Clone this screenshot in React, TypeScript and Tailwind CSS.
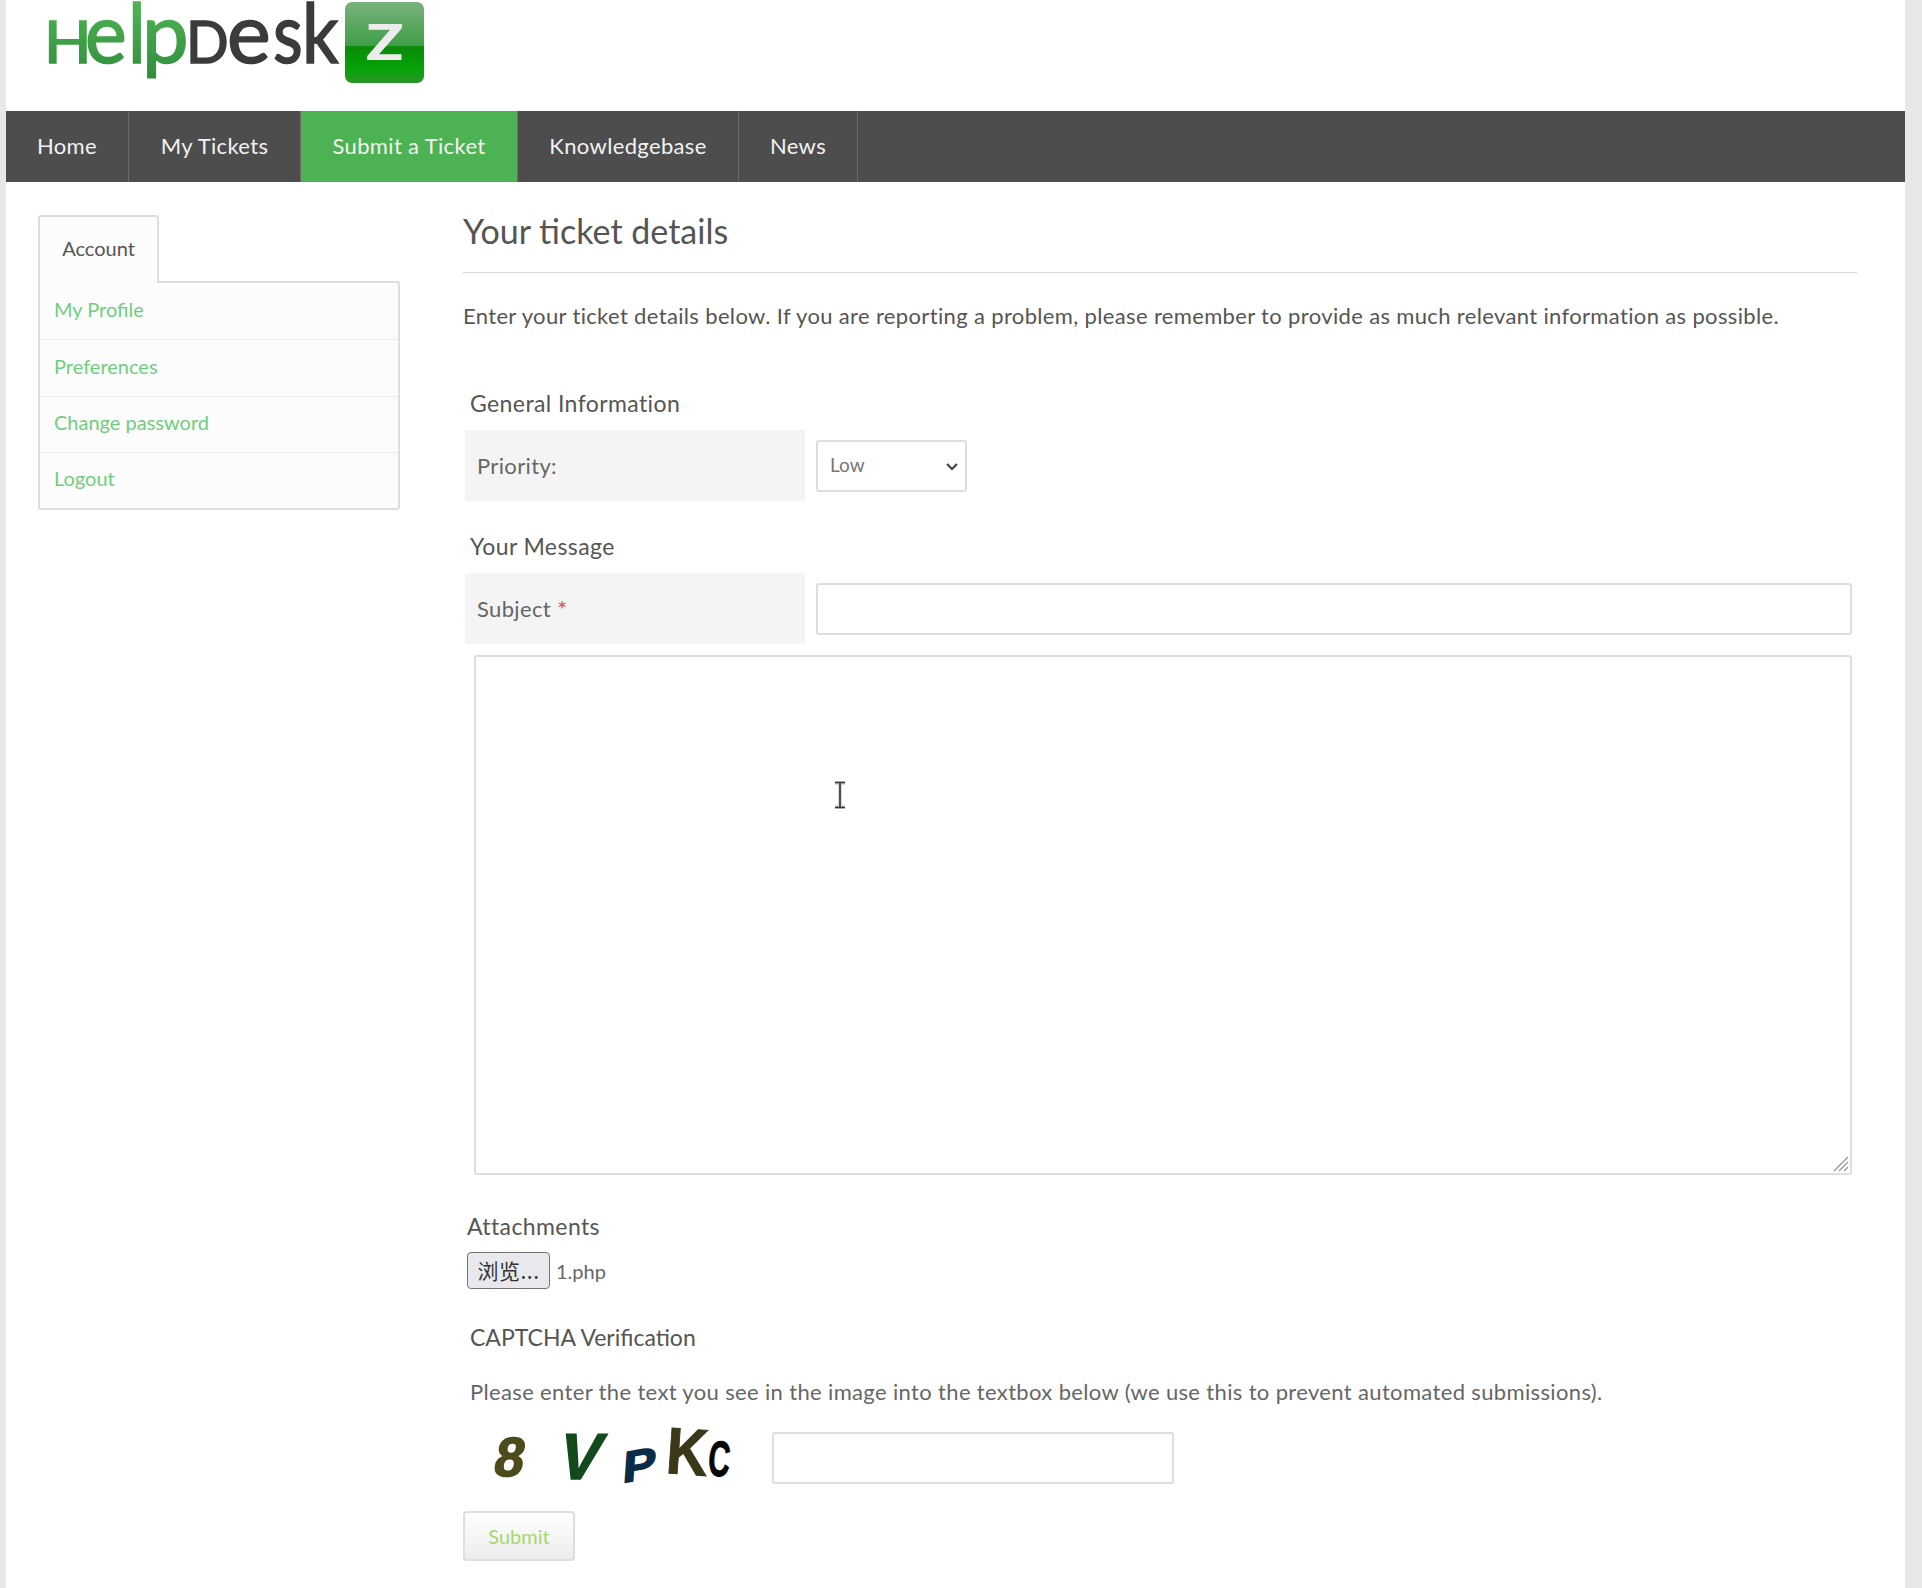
const navItems = [
  { label: "Home", width: "w-[123px]" },
  { label: "My Tickets", width: "w-[172px]" },
  { label: "Submit a Ticket", width: "w-[217px]", active: true },
  { label: "Knowledgebase", width: "w-[221px]" },
  { label: "News", width: "w-[119px]" },
];

const accountLinks = ["My Profile", "Preferences", "Change password", "Logout"];

const logoGreen = [
  { ch: "H", x: 38, size: 58, w: 48 },
  { ch: "e", x: 79, size: 84, w: 42 },
  { ch: "l", x: 122, size: 84, w: 18 },
  { ch: "p", x: 136, size: 84, w: 47 },
];

const logoDark = [
  { ch: "D", x: 180, size: 58, w: 43 },
  { ch: "e", x: 221, size: 84, w: 44 },
  { ch: "s", x: 267, size: 84, w: 30 },
  { ch: "k", x: 296, size: 84, w: 37 },
];

function Logo() {
  return (
    <svg width="430" height="90" viewBox="0 0 430 90" className="block">
      <defs>
        <linearGradient id="logo-green" gradientUnits="userSpaceOnUse" x1="0" y1="2" x2="0" y2="84">
          <stop offset="0" stopColor="#4fb453" />
          <stop offset="1" stopColor="#2f8a3c" />
        </linearGradient>
        <linearGradient id="logo-box" x1="0" y1="0" x2="0" y2="1">
          <stop offset="0" stopColor="#7ab27e" />
          <stop offset="0.54" stopColor="#3f9e45" />
          <stop offset="0.55" stopColor="#0b8a0b" />
          <stop offset="0.82" stopColor="#06a306" />
          <stop offset="1" stopColor="#2c942c" />
        </linearGradient>
      </defs>
      <g fontFamily="Lato, sans-serif">
        {logoGreen.map((l) => (
          <text key={l.x} x={l.x} y="63" fontSize={l.size} fill="url(#logo-green)" stroke="url(#logo-green)" strokeWidth="1.6" textLength={l.w} lengthAdjust="spacingAndGlyphs">
            {l.ch}
          </text>
        ))}
        {logoDark.map((l) => (
          <text key={l.x} x={l.x} y="63" fontSize={l.size} fill="#3b3b3b" stroke="#3b3b3b" strokeWidth="1.6" textLength={l.w} lengthAdjust="spacingAndGlyphs">
            {l.ch}
          </text>
        ))}
      </g>
      <rect x="339" y="2" width="79" height="81" rx="7" fill="url(#logo-box)" />
      <text x="360" y="60" fontFamily="Lato, sans-serif" fontSize="50" fontWeight="900" fill="#ececec" textLength="38" lengthAdjust="spacingAndGlyphs">Z</text>
    </svg>
  );
}

function Captcha() {
  return (
    <svg width="262" height="66" viewBox="0 0 262 66" className="block" fontFamily="'Liberation Sans', sans-serif" fontWeight="700">
      <text transform="translate(22 51) skewX(-10)" fontSize="55" fill="#4d4a1c" stroke="#4d4a1c" strokeWidth="1.5" textLength="30" lengthAdjust="spacingAndGlyphs">8</text>
      <text transform="translate(85 54) skewX(-14)" fontSize="65" fill="#124a1c" stroke="#124a1c" strokeWidth="1.5" textLength="42" lengthAdjust="spacingAndGlyphs">V</text>
      <text transform="translate(152 58) rotate(-10) skewX(-14)" fontSize="43" fill="#0b2c48" stroke="#0b2c48" strokeWidth="1.5" textLength="34" lengthAdjust="spacingAndGlyphs">P</text>
      <text transform="translate(195 48) rotate(4)" fontSize="66" fill="#3a3818" stroke="#3a3818" strokeWidth="1" textLength="42" lengthAdjust="spacingAndGlyphs">K</text>
      <text transform="translate(237 50) rotate(5)" fontSize="50" fill="#050505" stroke="#050505" strokeWidth="1" textLength="22" lengthAdjust="spacingAndGlyphs">C</text>
    </svg>
  );
}

function FieldLabel({ children }: { children: React.ReactNode }) {
  return (
    <div className="ml-[2px] flex h-[71px] w-[340px] shrink-0 items-center bg-[#f4f4f4] pl-3 text-[#666]">
      {children}
    </div>
  );
}

const inputClass = "rounded-[3px] border-2 border-[#dcdfe2] bg-white";
const sectionTitle = "ml-[7px] text-[23px] leading-[28px] tracking-[0.4px]";

export default function App() {
  return (
    <div className="h-[1588px] overflow-hidden bg-[#e8e8e8] pl-[6px] pr-[17px] font-['Lato',sans-serif] text-[22px] tracking-[0.35px] text-[#555]">
      <div className="h-full bg-white">
        <div className="h-[111px]">
          <Logo />
        </div>

        <nav className="flex h-[71px] bg-[#4d4d4d] text-[#f2f2f2]">
          {navItems.map((item) => (
            <a
              key={item.label}
              className={`flex items-center justify-center border-r border-[#6a6a6a] pb-[2px] ${item.width} ${item.active ? "bg-[#4cb253]" : ""}`}
            >
              {item.label}
            </a>
          ))}
        </nav>

        <div className="flex pl-[32px] pr-[48px]">
          <aside className="mt-[33px] w-[362px] shrink-0 text-[20px] tracking-normal">
            <div className="relative z-10 -mb-[2px] flex h-[68px] w-[121px] items-center justify-center rounded-t-[3px] border-2 border-b-0 border-[#dcdfe2] bg-[#fcfcfc] pb-[4px] text-[#555]">
              Account
            </div>
            <ul className="rounded-b-[3px] rounded-tr-[3px] border-2 border-[#dcdfe2] bg-[#fcfcfc]">
              {accountLinks.map((link, index) => (
                <li
                  key={link}
                  className={`flex h-[56.25px] items-center pb-[4px] pl-[14px] text-[#6fce7e] ${index > 0 ? "border-t border-[#ececec]" : ""}`}
                >
                  {link}
                </li>
              ))}
            </ul>
          </aside>

          <main className="ml-[63px] min-w-0 flex-1">
            <h1 className="mt-[29px] border-b border-[#d8d8d8] pb-[21px] text-[34px] leading-[40px] tracking-normal text-[#555]">
              Your ticket details
            </h1>
            <p className="mt-[29px] leading-[28px]">
              Enter your ticket details below. If you are reporting a problem, please remember to provide as much relevant information as possible.
            </p>

            <h2 className={`mt-[59px] ${sectionTitle}`}>General Information</h2>
            <div className="mt-[13px] flex items-center">
              <FieldLabel>Priority:</FieldLabel>
              <div className={`ml-[11px] flex h-[52px] w-[151px] items-center justify-between pl-3 pr-[6px] text-[19px] tracking-normal text-[#777] ${inputClass}`}>
                Low
                <svg width="14" height="14" viewBox="0 0 14 14" fill="none" stroke="#444" strokeWidth="2.2">
                  <path d="M2 5l5 5 5-5" />
                </svg>
              </div>
            </div>

            <h2 className={`mt-[31px] ${sectionTitle}`}>Your Message</h2>
            <div className="mt-[13px] flex items-center pr-[5px]">
              <FieldLabel>
                Subject&nbsp;<span className="text-[24px] text-[#d9534f]">*</span>
              </FieldLabel>
              <div className={`ml-[11px] h-[52px] flex-1 ${inputClass}`} />
            </div>

            <div className={`relative mt-[11px] ml-[11px] mr-[5px] h-[520px] ${inputClass}`}>
              <svg width="16" height="30" viewBox="0 0 16 30" fill="none" className="absolute left-[356px] top-[123px]">
                <path d="M3 3h10M8 3v24M3 27h10" stroke="#ccc" strokeWidth="3.5" />
                <path d="M3 2.5h10M8 2.5v25M3 27.5h10" stroke="#333" strokeWidth="1.6" />
              </svg>
              <svg width="16" height="16" viewBox="0 0 16 16" stroke="#999" strokeWidth="1.4" className="absolute bottom-[1px] right-[1px]">
                <path d="M15 1L1 15M15 6L6 15M15 11l-4 4" />
              </svg>
            </div>

            <h2 className={`mt-[37px] !ml-[4px] ${sectionTitle}`}>Attachments</h2>
            <div className="mt-[12px] ml-[4px] flex items-center">
              <button className="flex h-[37px] w-[83px] items-center justify-center rounded-[4px] border border-[#767676] bg-[#e9e9ed] font-['Noto_Sans_CJK_SC',sans-serif] text-[21px] tracking-[0.5px] text-[#333]">
                浏览...
              </button>
              <span className="ml-[6px] text-[20px] tracking-normal text-[#666]">1.php</span>
            </div>

            <h2 className={`mt-[34px] ${sectionTitle} !tracking-normal`}>CAPTCHA Verification</h2>
            <p className="mt-[27px] ml-[7px] leading-[28px] text-[#666]">
              Please enter the text you see in the image into the textbox below (we use this to prevent automated submissions).
            </p>
            <div className="mt-[19px] ml-[7px] flex items-center">
              <Captcha />
              <div className={`ml-[40px] h-[52px] w-[402px] ${inputClass}`} />
            </div>
            <button className="mt-[20px] h-[50px] w-[112px] rounded-[4px] border-2 border-[#dcdfe2] bg-gradient-to-b from-white to-[#ededed] text-[20px] tracking-normal text-[#a5d86c]">
              Submit
            </button>
          </main>
        </div>
      </div>
    </div>
  );
}
